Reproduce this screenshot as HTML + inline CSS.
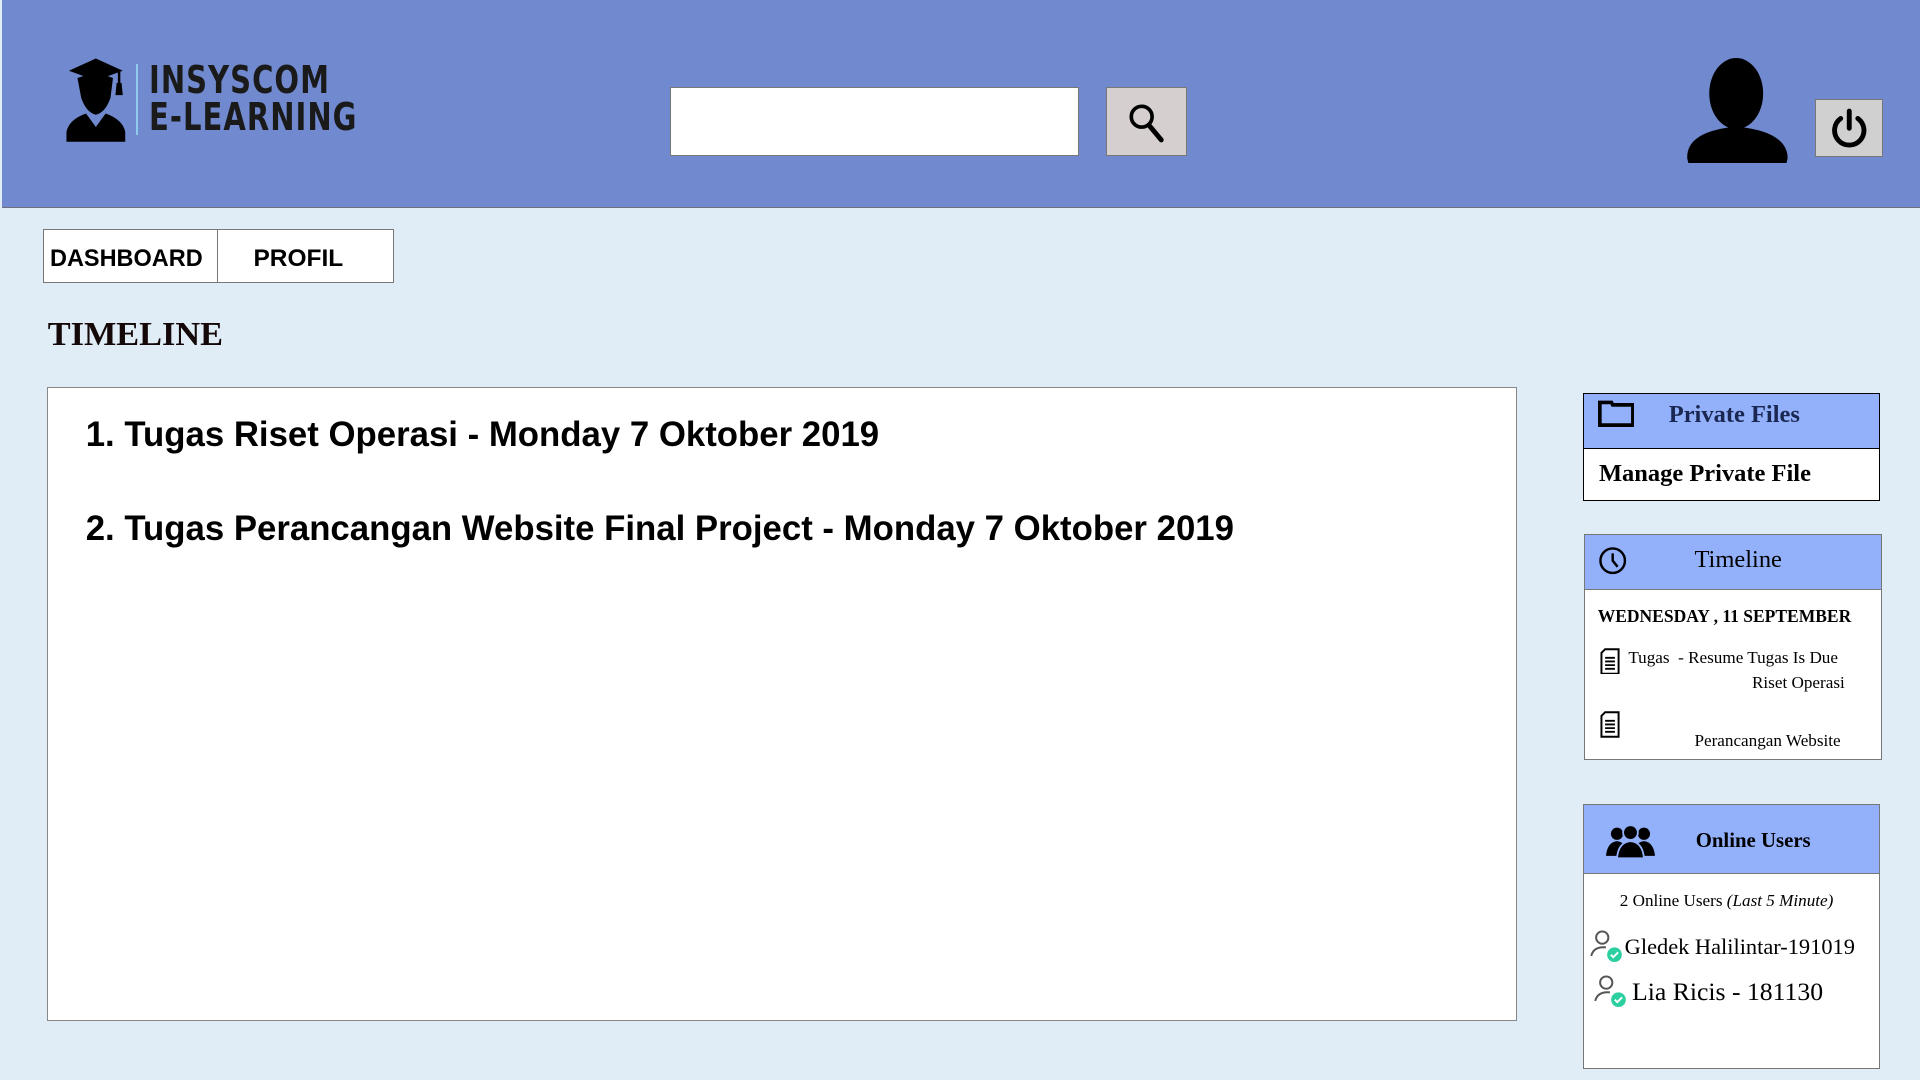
<!DOCTYPE html>
<html><head><meta charset="utf-8"><style>
*{margin:0;padding:0;box-sizing:border-box}
html,body{width:1920px;height:1080px;overflow:hidden;background:#e0edf6}
#w{position:absolute;left:0;top:0;width:1568px;height:882px;zoom:1.22449;font-family:"Liberation Sans",sans-serif;color:#000}
.a{position:absolute}
.hdr{left:2px;top:0;width:1566px;height:170px;background:#7189cf;border-bottom:1px solid #6e7080}
.serif{font-family:"Liberation Serif",serif}
.side{background:#fff;border:1px solid #777}
.sh{background:#93b0fb;position:absolute;left:0;right:0;top:0;border-bottom:1px solid #777}
</style></head><body><div id="w">
<div class="a hdr"></div>
<svg class="a" style="left:52px;top:46px" width="52" height="72" viewBox="0 0 52 72">
<path d="M4 12 L26 2 L48 12 L26 20 Z" fill="#000"/>
<rect x="44" y="12" width="2" height="10" fill="#000"/><path d="M43 22 h4 l1 10 h-6z" fill="#000"/>
<path d="M11 18 Q26 12 40 18 L38 34 Q34 46 26 48 Q18 46 14 34 Z" fill="#000"/>
<path d="M18 47 L26 58 L34 47 Q48 52 50 62 L50 70 L2 70 L2 62 Q4 52 18 47Z" fill="#000"/>
</svg>
<div class="a" style="left:111px;top:52px;width:2px;height:58px;background:#8fc9ec"></div>
<div class="a" style="left:122px;top:51px;font:bold 31px/30px 'DejaVu Sans Condensed','Liberation Sans',sans-serif;color:#1a1a1a;transform:scaleX(.85);transform-origin:left;letter-spacing:1px">INSYSCOM<br>E-LEARNING</div>
<div class="a" style="left:547px;top:71px;width:334px;height:56px;background:#fff;border:1px solid #777"></div>
<div class="a" style="left:903px;top:71px;width:66px;height:56px;background:#d6cfcf;border:1px solid #777"></div>
<svg class="a" style="left:920px;top:83px" width="34" height="34" viewBox="0 0 34 34"><circle cx="12" cy="12" r="8.5" fill="none" stroke="#000" stroke-width="3"/><path d="M18 19 L28 31" stroke="#000" stroke-width="4" stroke-linecap="round"/></svg>
<svg class="a" style="left:1377px;top:47px" width="84" height="86" viewBox="0 0 84 86"><ellipse cx="41" cy="29" rx="22" ry="29" fill="#000"/><path d="M1 82 Q0 60 41 56 Q83 60 83 82 L82 86 L2 86Z" fill="#000"/></svg>
<div class="a" style="left:1482px;top:81px;width:56px;height:47px;background:#d0d0d0;border:1px solid #777"></div>
<svg class="a" style="left:1491px;top:86px" width="38" height="38" viewBox="0 0 38 38"><path d="M12 11 A12 12 0 1 0 26 11" fill="none" stroke="#000" stroke-width="4" stroke-linecap="round"/><path d="M19 5 V19" stroke="#000" stroke-width="4" stroke-linecap="round"/></svg>
<div class="a" style="left:35px;top:187px;width:287px;height:44px;background:#fff;border:1px solid #777"></div>
<div class="a" style="left:177px;top:187px;width:1px;height:44px;background:#777"></div>
<div class="a" style="left:41px;top:199px;font:bold 20px/24px 'Liberation Sans',sans-serif;transform:scaleX(.96);transform-origin:left">DASHBOARD</div>
<div class="a" style="left:207px;top:199px;font:bold 20px/24px 'Liberation Sans',sans-serif">PROFIL</div>
<div class="a serif" style="left:39px;top:257px;font-weight:bold;font-size:28px;line-height:32px;color:#140808">TIMELINE</div>
<div class="a" style="left:38px;top:316px;width:1201px;height:518px;background:#fff;border:1px solid #888"></div>
<div class="a" style="left:70px;top:339px;font:bold 28.4px/34px 'Liberation Sans',sans-serif;white-space:nowrap">1. Tugas Riset Operasi - Monday 7 Oktober 2019</div>
<div class="a" style="left:70px;top:416px;font:bold 28.4px/34px 'Liberation Sans',sans-serif;white-space:nowrap">2. Tugas Perancangan Website Final Project - Monday 7 Oktober 2019</div>

<div class="a side" style="left:1293px;top:321px;width:242px;height:88px;border-color:#000">
<div class="sh" style="height:45px;border-color:#000"></div>
<svg class="a" style="left:11px;top:5px" width="30" height="22" viewBox="0 0 30 22"><path d="M1.5 2 H11 L12 4 H28.5 V20.5 H1.5Z" fill="none" stroke="#000" stroke-width="3"/></svg>
<div class="a serif" style="left:69px;top:6px;font-weight:bold;font-size:20px;color:#1a2750">Private Files</div>
<div class="a serif" style="left:12px;top:54px;font-weight:bold;font-size:20px">Manage Private File</div>
</div>

<div class="a side" style="left:1294px;top:436px;width:243px;height:185px">
<div class="sh" style="height:45px"></div>
<svg class="a" style="left:10px;top:9px" width="24" height="24" viewBox="0 0 24 24"><circle cx="12" cy="12" r="10" fill="none" stroke="#000" stroke-width="2"/><path d="M12 6 V12 L16 17" fill="none" stroke="#000" stroke-width="2"/></svg>
<div class="a serif" style="left:89px;top:9px;font-size:20px">Timeline</div>
<div class="a serif" style="left:10px;top:58px;font-weight:bold;font-size:14.3px">WEDNESDAY , 11 SEPTEMBER</div>
<svg class="a" style="left:11px;top:92px" width="18" height="22" viewBox="0 0 18 22"><path d="M5 1 H16 V21 H2 V4Z" fill="none" stroke="#000" stroke-width="1.6"/><path d="M5 8h8M5 11h8M5 14h8M5 17h8" stroke="#000" stroke-width="1.5"/></svg>
<div class="a serif" style="left:35px;top:92px;font-size:14px">Tugas&nbsp; - Resume Tugas Is Due</div>
<div class="a serif" style="left:136px;top:113px;font-size:14px">Riset Operasi</div>
<svg class="a" style="left:11px;top:144px" width="18" height="22" viewBox="0 0 18 22"><path d="M5 1 H16 V21 H2 V4Z" fill="none" stroke="#000" stroke-width="1.6"/><path d="M5 8h8M5 11h8M5 14h8M5 17h8" stroke="#000" stroke-width="1.5"/></svg>
<div class="a serif" style="left:89px;top:160px;font-size:14px">Perancangan Website</div>
</div>

<div class="a side" style="left:1293px;top:657px;width:242px;height:216px">
<div class="sh" style="height:56px"></div>
<svg class="a" style="left:18px;top:15px" width="40" height="28" viewBox="0 0 40 28"><circle cx="9" cy="8" r="5" fill="#000"/><circle cx="31" cy="8" r="5" fill="#000"/><path d="M0 26 Q1 15 9 14 Q17 15 18 26Z" fill="#000"/><path d="M22 26 Q23 15 31 14 Q39 15 40 26Z" fill="#000"/><circle cx="20" cy="7" r="6" fill="#000" stroke="#93b0fb" stroke-width="1.5"/><path d="M9 28 Q10 15 20 14 Q30 15 31 28Z" fill="#000" stroke="#93b0fb" stroke-width="1.5"/></svg>
<div class="a serif" style="left:91px;top:18px;font-weight:bold;font-size:17px">Online Users</div>
<div class="a serif" style="left:29px;top:70px;font-size:14px">2 Online Users <i>(Last 5 Minute)</i></div>
<svg class="a" style="left:5px;top:101px" width="28" height="28" viewBox="0 0 28 28"><circle cx="10" cy="7" r="5" fill="none" stroke="#555" stroke-width="1.6"/><path d="M1 22 Q3 14 13 15" fill="none" stroke="#555" stroke-width="1.6"/><circle cx="20" cy="21" r="6" fill="#2ccf9f"/><path d="M17 21 l2 2 l4-4" stroke="#fff" stroke-width="1.6" fill="none"/></svg>
<div class="a serif" style="left:33px;top:105px;font-size:18.3px">Gledek Halilintar-191019</div>
<svg class="a" style="left:8px;top:138px" width="28" height="28" viewBox="0 0 28 28"><circle cx="10" cy="7" r="5" fill="none" stroke="#555" stroke-width="1.6"/><path d="M1 22 Q3 14 13 15" fill="none" stroke="#555" stroke-width="1.6"/><circle cx="20" cy="21" r="6" fill="#2ccf9f"/><path d="M17 21 l2 2 l4-4" stroke="#fff" stroke-width="1.6" fill="none"/></svg>
<div class="a serif" style="left:39px;top:140px;font-size:21px">Lia Ricis - 181130</div>
</div>
</div></body></html>
